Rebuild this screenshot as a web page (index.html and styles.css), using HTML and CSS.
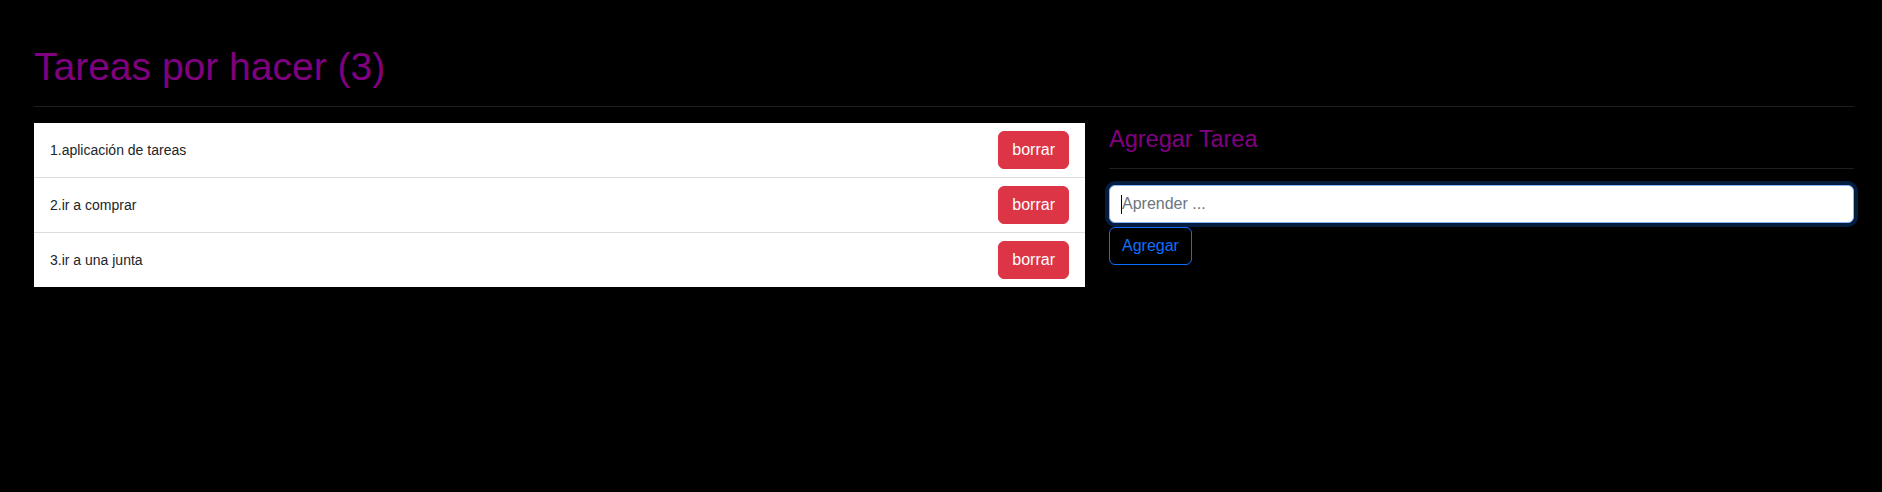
FILE: index.html
```html
<!DOCTYPE html>
<html lang="es">
<head>
<meta charset="utf-8">
<title>Tareas por hacer</title>
<link rel="stylesheet" href="styles.css">
</head>
<body>
<div class="page">
  <h1 class="title">Tareas por hacer (3)</h1>
  <hr class="rule rule-top">
  <div class="layout">
    <ul class="tasks">
      <li class="task"><span class="task-text">1.aplicación de tareas</span><button class="btn btn-danger">borrar</button></li>
      <li class="task"><span class="task-text">2.ir a comprar</span><button class="btn btn-danger">borrar</button></li>
      <li class="task"><span class="task-text">3.ir a una junta</span><button class="btn btn-danger">borrar</button></li>
    </ul>
    <section class="add">
      <h4 class="add-title">Agregar Tarea</h4>
      <hr class="rule rule-add">
      <div class="field"><span class="caret"></span><input class="input" type="text" placeholder="Aprender ..."></div>
      <button class="btn btn-outline">Agregar</button>
    </section>
  </div>
</div>
</body>
</html>
```

FILE: styles.css
```css
html, body {
  margin: 0;
  padding: 0;
  background: #000;
}

body {
  font-family: "Liberation Sans", Arial, sans-serif;
  color: #212529;
}

.page {
  padding: 44px 28px 0 34px;
}

.title {
  margin: 0;
  font-size: 39px;
  line-height: 1.2;
  font-weight: 400;
  color: #800080;
}

.rule {
  border: 0;
  height: 1px;
  background: #1e1e1e;
  margin: 0;
}

.rule-top {
  margin: 15px 0 16px;
}

.layout {
  display: grid;
  grid-template-columns: 1051px 1fr;
  column-gap: 24px;
  align-items: start;
}

.tasks {
  list-style: none;
  margin: 0;
  padding: 0;
  background: #fff;
}

.task {
  display: flex;
  align-items: center;
  justify-content: space-between;
  padding: 8px 16px;
  border-bottom: 1px solid #dcdcdc;
}

.task:last-child {
  border-bottom: 0;
}

.task-text {
  font-size: 14px;
  color: #212529;
}

.btn {
  font-family: "Liberation Sans", Arial, sans-serif;
  font-size: 16px;
  line-height: 24px;
  padding: 6px 12px;
  border-radius: 6px;
  border: 1px solid transparent;
  cursor: pointer;
}

.btn-danger {
  padding: 6px 13px;
  background: #dc3545;
  border-color: #dc3545;
  color: #fff;
}

.btn-outline {
  margin-top: 4px;
  background: transparent;
  border-color: #0d6efd;
  color: #0d6efd;
}

.add-title {
  margin: 2px 0 0;
  font-size: 23.5px;
  line-height: 1.2;
  font-weight: 400;
  color: #800080;
}

.rule-add {
  margin: 15px 0 16px;
}

.field {
  position: relative;
}

.input {
  display: block;
  box-sizing: border-box;
  width: 100%;
  height: 38px;
  padding: 6px 12px;
  font-family: "Liberation Sans", Arial, sans-serif;
  font-size: 16px;
  line-height: 24px;
  color: #212529;
  background: #fff;
  border: 1px solid #86b7fe;
  border-radius: 6px;
  box-shadow: 0 0 0 4px rgba(13, 110, 253, 0.25);
  outline: none;
}

.input::placeholder {
  color: #6c757d;
}

.caret {
  position: absolute;
  left: 12px;
  top: 10px;
  width: 1px;
  height: 19px;
  background: #000;
  z-index: 1;
}
```
